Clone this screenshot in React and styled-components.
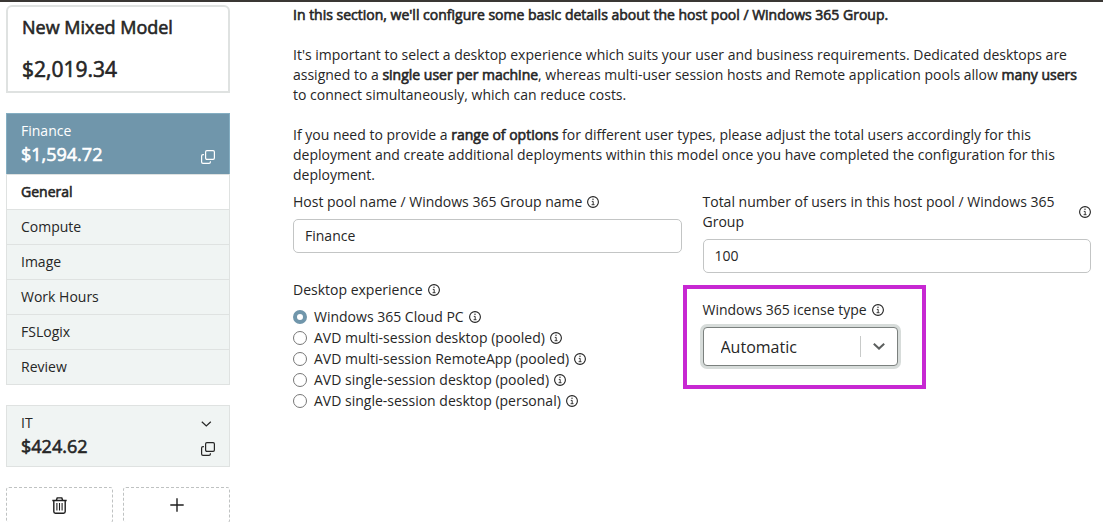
import React, { useState } from "react";
import styled, { createGlobalStyle } from "styled-components";

const theme = {
  text: "#262626",
  blue: "#7096ab",
  pale: "#f0f4f3",
  line: "#dfe2e1",
  inputLine: "#c3c5c5",
  purple: "#c728d2",
};

const GlobalStyle = createGlobalStyle`
  *, *::before, *::after {
    box-sizing: border-box;
  }
  body {
    margin: 0;
    overflow: hidden;
    background: #fff;
    color: ${theme.text};
    font-family: "Open Sans", "Noto Sans", sans-serif;
    font-size: 14px;
    line-height: 20px;
  }
  button, input, select {
    font: inherit;
    color: inherit;
    margin: 0;
  }
  svg {
    display: block;
    flex: none;
  }
`;

const Page = styled.div`
  border-top: 2px solid #3a3734;
  padding: 3px 12px 0 6px;
  display: flex;
  align-items: flex-start;
  gap: 63px;
`;

const Sidebar = styled.aside`
  flex: 0 0 224px;
  display: flex;
  flex-direction: column;
  gap: 20px;
`;

const Heavy = styled.strong`
  font-weight: 400;
  -webkit-text-stroke: 0.6px currentColor;
`;

const ModelCard = styled.div`
  border: 2px solid ${theme.line};
  border-radius: 6px 6px 0 0;
  padding: 8px 14px;
`;

const ModelName = styled(Heavy)`
  display: block;
  font-size: 18px;
  line-height: 24px;
  margin-bottom: 16px;
`;

const ModelTotal = styled(Heavy)`
  display: block;
  font-size: 21px;
  line-height: 28px;
`;

const Deployment = styled.section`
  border: 1px solid ${theme.line};
`;

const DeploymentHead = styled.div`
  display: flex;
  justify-content: space-between;
  margin: ${(p) => (p.$active ? "-1px -1px 0" : "0")};
  border: ${(p) => (p.$active ? "1px solid #84aec2" : "0")};
  border-bottom: 0;
  padding: 7px 14px;
  background: ${(p) => (p.$active ? theme.blue : theme.pale)};
  color: ${(p) => (p.$active ? "#fff" : theme.text)};
`;

const DeploymentCost = styled(Heavy)`
  display: block;
  font-size: 18px;
  line-height: 26px;
`;

const HeadActions = styled.div`
  display: flex;
  flex-direction: column;
  align-items: flex-start;
  justify-content: flex-end;
  gap: 15px;
  padding-bottom: 3px;
`;

const IconButton = styled.button`
  border: 0;
  padding: 0;
  background: none;
  cursor: pointer;
`;

const StepLink = styled.a`
  display: block;
  border-top: 1px solid ${theme.line};
  padding: 7px 14px;
  background: ${(p) => (p.$active ? "#fff" : theme.pale)};
  color: inherit;
  text-decoration: none;
`;

const DashedRow = styled.div`
  display: grid;
  grid-template-columns: 1fr 1fr;
  gap: 10px;
`;

const DashedButton = styled.button`
  height: 36px;
  display: flex;
  align-items: center;
  justify-content: center;
  border: 1px dashed #bfc2c2;
  border-radius: 3px;
  background: #fff;
  cursor: pointer;
`;

const Main = styled.main`
  flex: 1;
  min-width: 0;
`;

const Paragraph = styled.p`
  margin: 0 0 20px;
  &:last-of-type {
    margin-bottom: 7px;
  }
`;

const Columns = styled.div`
  display: grid;
  grid-template-columns: 1fr 1fr;
  gap: 21px;
  align-items: start;
`;

const LabelRow = styled.div`
  display: flex;
  align-items: center;
  gap: 5px;
`;

const TextInput = styled.input`
  display: block;
  width: 100%;
  height: 34px;
  margin-top: 7px;
  padding: 0 11px 2px;
  border: 1px solid ${theme.inputLine};
  border-radius: 5px;
  background: #fff;
`;

const RadioGroup = styled.fieldset`
  border: 0;
  margin: 27px 0 0;
  padding: 0;
  legend {
    padding: 0 0 6px;
  }
`;

const RadioRow = styled(LabelRow)`
  height: 21px;
  label {
    display: flex;
    align-items: center;
    gap: 7px;
  }
`;

const Radio = styled.input`
  appearance: none;
  width: 14px;
  height: 14px;
  border: 1px solid #777;
  border-radius: 50%;
  background: #fff;
  &:checked {
    border: 4px solid ${theme.blue};
  }
`;

const Highlight = styled.div`
  width: 243px;
  margin: 12px 0 0 -20px;
  padding: 11px 24px 19px 16px;
  border: 4px solid ${theme.purple};
`;

const SelectBox = styled.div`
  position: relative;
  width: 195px;
  margin-top: 7px;
  svg {
    position: absolute;
    right: 13px;
    top: 16px;
    pointer-events: none;
  }
  &::after {
    content: "";
    position: absolute;
    right: 37px;
    top: 9px;
    bottom: 9px;
    width: 1px;
    background: #c8cac9;
  }
`;

const Select = styled.select`
  appearance: none;
  display: block;
  width: 100%;
  height: 39px;
  padding: 1px 40px 0 17px;
  border: 1px solid #7b807e;
  border-radius: 4px;
  box-shadow: 0 0 0 3px #d7dcda;
  background: #fff;
  font-size: 16px;
`;

const InfoIcon = () => (
  <svg width="12" height="12" viewBox="0 0 12 12" fill="none" stroke="#222" aria-hidden="true">
    <circle cx="6" cy="6" r="5.4" strokeWidth="1.1" />
    <path d="M4.8 5.4H6.2V8.6M4.6 8.7H7.5" strokeWidth="0.9" />
    <circle cx="6" cy="3.3" r="0.7" fill="#222" stroke="none" />
  </svg>
);

const CopyIcon = () => (
  <svg width="14" height="14" viewBox="0 0 14 14" fill="none" stroke="currentColor" strokeWidth="1.2" aria-hidden="true">
    <rect x="4.6" y="0.6" width="8.8" height="8.8" rx="1.3" />
    <path d="M2.9 4.6H2Q.6 4.6 .6 6V12Q.6 13.4 2 13.4H8Q9.4 13.4 9.4 12V11.2" />
  </svg>
);

const ChevronIcon = () => (
  <svg width="11" height="6" viewBox="0 0 11 6" fill="none" stroke="currentColor" strokeWidth="1.2" aria-hidden="true">
    <path d="M.8 .7L5.3 5L9.8 .7" />
  </svg>
);

const TrashIcon = () => (
  <svg width="15" height="17" viewBox="0 0 15 17" fill="none" stroke="#1f1f1f" strokeWidth="1.3" aria-hidden="true">
    <path d="M.3 3.5H14.7M4.3 3.2L5.2 .9H9.8L10.7 3.2" strokeWidth="1.4" />
    <path d="M1.8 3.6V14.5Q1.8 16.2 3.4 16.2H11.6Q13.2 16.2 13.2 14.5V3.6" strokeWidth="1.4" />
    <path d="M4.9 6V13.6M7.5 6V13.6M10.1 6V13.6" strokeWidth="1.1" />
  </svg>
);

const PlusIcon = () => (
  <svg width="14" height="14" viewBox="0 0 14 14" stroke="#1f1f1f" strokeWidth="1.4" aria-hidden="true">
    <path d="M7 .3V13.7M.3 7H13.7" />
  </svg>
);

const steps = ["General", "Compute", "Image", "Work Hours", "FSLogix", "Review"];

const experiences = [
  "Windows 365 Cloud PC",
  "AVD multi-session desktop (pooled)",
  "AVD multi-session RemoteApp (pooled)",
  "AVD single-session desktop (pooled)",
  "AVD single-session desktop (personal)",
];

const App = () => {
  const [experience, setExperience] = useState(experiences[0]);

  return (
    <>
      <GlobalStyle />
      <Page>
        <Sidebar>
          <ModelCard>
            <ModelName>New Mixed Model</ModelName>
            <ModelTotal>$2,019.34</ModelTotal>
          </ModelCard>
          <Deployment>
            <DeploymentHead $active>
              <div>
                Finance
                <DeploymentCost>$1,594.72</DeploymentCost>
              </div>
              <HeadActions>
                <IconButton aria-label="Copy Finance">
                  <CopyIcon />
                </IconButton>
              </HeadActions>
            </DeploymentHead>
            <nav>
              {steps.map((step) => (
                <StepLink key={step} href="#" $active={step === "General"}>
                  {step === "General" ? <Heavy>{step}</Heavy> : step}
                </StepLink>
              ))}
            </nav>
          </Deployment>
          <Deployment>
            <DeploymentHead>
              <div>
                IT
                <DeploymentCost>$424.62</DeploymentCost>
              </div>
              <HeadActions>
                <IconButton aria-label="Expand IT">
                  <ChevronIcon />
                </IconButton>
                <IconButton aria-label="Copy IT">
                  <CopyIcon />
                </IconButton>
              </HeadActions>
            </DeploymentHead>
          </Deployment>
          <DashedRow>
            <DashedButton aria-label="Delete deployment">
              <TrashIcon />
            </DashedButton>
            <DashedButton aria-label="Add deployment">
              <PlusIcon />
            </DashedButton>
          </DashedRow>
        </Sidebar>

        <Main>
          <Paragraph>
            <Heavy>
              In this section, we'll configure some basic details about the host pool / Windows 365 Group.
            </Heavy>
          </Paragraph>
          <Paragraph>
            It's important to select a desktop experience which suits your user and business requirements.
            Dedicated desktops are assigned to a <Heavy>single user per machine</Heavy>, whereas multi-user
            session hosts and Remote application pools allow <Heavy>many users</Heavy> to connect
            simultaneously, which can reduce costs.
          </Paragraph>
          <Paragraph>
            If you need to provide a <Heavy>range of options</Heavy> for different user types, please adjust
            the total users accordingly for this deployment and create additional deployments within this
            model once you have completed the configuration for this deployment.
          </Paragraph>
          <Columns>
            <div>
              <LabelRow>
                <label htmlFor="pool-name">Host pool name / Windows 365 Group name</label>
                <InfoIcon />
              </LabelRow>
              <TextInput id="pool-name" defaultValue="Finance" />
              <RadioGroup>
                <legend>
                  <LabelRow>
                    Desktop experience
                    <InfoIcon />
                  </LabelRow>
                </legend>
                {experiences.map((item) => (
                  <RadioRow key={item}>
                    <label>
                      <Radio
                        type="radio"
                        name="experience"
                        checked={experience === item}
                        onChange={() => setExperience(item)}
                      />
                      {item}
                    </label>
                    <InfoIcon />
                  </RadioRow>
                ))}
              </RadioGroup>
            </div>
            <div>
              <LabelRow>
                <label htmlFor="total-users">
                  Total number of users in this host pool / Windows 365 Group
                </label>
                <InfoIcon />
              </LabelRow>
              <TextInput id="total-users" defaultValue="100" />
              <Highlight>
                <LabelRow>
                  <label htmlFor="license">Windows 365 icense type</label>
                  <InfoIcon />
                </LabelRow>
                <SelectBox>
                  <Select id="license" defaultValue="Automatic">
                    <option>Automatic</option>
                  </Select>
                  <svg width="12" height="7" viewBox="0 0 12 7" fill="none" stroke="#5c5f5e" strokeWidth="2" aria-hidden="true">
                    <path d="M.8 .8L6 5.6L11.2 .8" />
                  </svg>
                </SelectBox>
              </Highlight>
            </div>
          </Columns>
        </Main>
      </Page>
    </>
  );
};

export default App;
